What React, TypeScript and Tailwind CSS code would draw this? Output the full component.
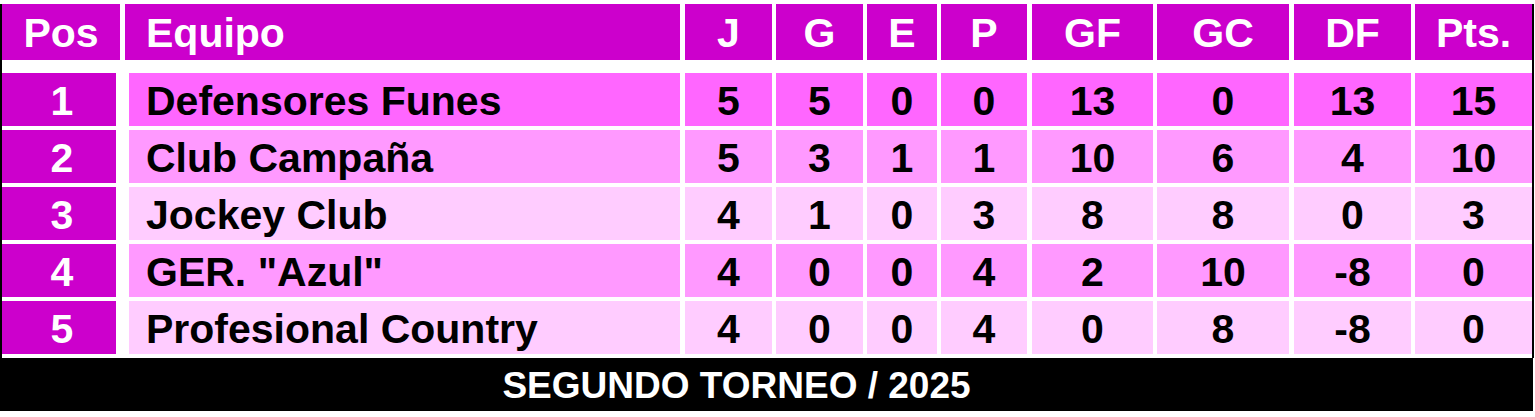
const HEAD_BG = "bg-[#cc00cc]";

type Row = {
  pos: number;
  team: string;
  stats: (number | string)[];
  bg: string;
};

const rows: Row[] = [
  { pos: 1, team: "Defensores Funes", stats: [5, 5, 0, 0, 13, 0, 13, 15], bg: "bg-[#ff66ff]" },
  { pos: 2, team: "Club Campaña", stats: [5, 3, 1, 1, 10, 6, 4, 10], bg: "bg-[#ff99ff]" },
  { pos: 3, team: "Jockey Club", stats: [4, 1, 0, 3, 8, 8, 0, 3], bg: "bg-[#ffccff]" },
  { pos: 4, team: 'GER. "Azul"', stats: [4, 0, 0, 4, 2, 10, -8, 0], bg: "bg-[#ff99ff]" },
  { pos: 5, team: "Profesional Country", stats: [4, 0, 0, 4, 0, 8, -8, 0], bg: "bg-[#ffccff]" },
];

// stat columns: J G E P GF GC DF Pts
const statCols = [
  { label: "J", cls: "ml-[5px] w-[87px]" },
  { label: "G", cls: "ml-[4px] w-[87px]" },
  { label: "E", cls: "ml-[4px] w-[70px]" },
  { label: "P", cls: "ml-[4px] w-[86px]" },
  { label: "GF", cls: "ml-[5px] w-[121px]" },
  { label: "GC", cls: "ml-[4px] w-[132px]" },
  { label: "DF", cls: "ml-[5px] w-[117px]" },
  { label: "Pts.", cls: "ml-[4px] w-[117px]" },
];

export default function App() {
  return (
    <div className="w-[1535px] h-[417px] bg-white pt-[4px] font-['Liberation_Sans',Arial,sans-serif] font-bold">
      <div className="w-[1534px] border-l-[2px] border-r-[2px] border-black pb-[4px]">
        {/* Header */}
        <div className="flex h-[56px] text-white text-[41px] leading-none">
          <div className={`w-[118px] ${HEAD_BG} flex items-center justify-center pt-[2px]`}>Pos</div>
          <div className={`ml-[5px] w-[555px] ${HEAD_BG} flex items-center pl-[21px] pt-[2px]`}>Equipo</div>
          {statCols.map((c) => (
            <div key={c.label} className={`${c.cls} ${HEAD_BG} flex items-center justify-center pt-[2px]`}>
              {c.label}
            </div>
          ))}
        </div>

        {/* Rows */}
        <div className="mt-[13px] flex flex-col gap-[4px]">
          {rows.map((r) => (
            <div key={r.pos} className="flex h-[53px] text-[41px] leading-none">
              <div className={`w-[114px] ${HEAD_BG} text-white flex items-center justify-center pl-[6px] pt-[3px]`}>{r.pos}</div>
              <div className={`ml-[13px] w-[551px] ${r.bg} text-black flex items-center pl-[17px] pt-[3px]`}>{r.team}</div>
              {r.stats.map((s, i) => (
                <div key={i} className={`${statCols[i].cls} ${r.bg} text-black flex items-center justify-center pt-[3px]`}>
                  {s}
                </div>
              ))}
            </div>
          ))}
        </div>
      </div>

      {/* Footer */}
      <div className="w-[1533px] h-[53px] bg-black text-white text-[37px] leading-none flex items-center justify-center pr-[60px] pt-[2px]">
        SEGUNDO TORNEO / 2025
      </div>
    </div>
  );
}
